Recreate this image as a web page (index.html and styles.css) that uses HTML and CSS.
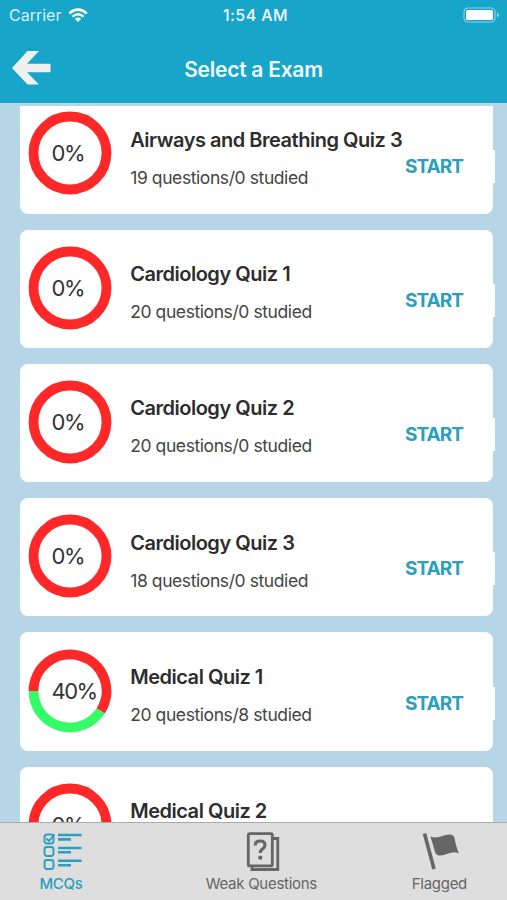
FILE: index.html
```html
<!DOCTYPE html>
<html lang="en">
<head>
  <meta charset="UTF-8">
  <meta name="viewport" content="width=device-width, initial-scale=1.0">
  <title>Select a Exam</title>
  <link rel="stylesheet" href="styles.css">
</head>
<body>
  <header class="header">
    <div class="status-bar">
      <div class="carrier">
        <span>Carrier</span>
        <svg class="wifi" viewBox="0 0 20 15" width="20" height="15">
          <path d="M1.2 5.500 Q10 -2.200 18.800 5.500" fill="none" stroke="#fff" stroke-width="2.500"/>
          <path d="M4.400 8.700 Q10 3.800 15.600 8.700" fill="none" stroke="#fff" stroke-width="2.400"/>
          <path d="M6.900 10.800 Q10 8 13.100 10.800 L10 14 Z" fill="#fff"/>
        </svg>
      </div>
      <span class="time">1:54 AM</span>
      <svg class="battery" viewBox="0 0 37 16" width="37" height="16">
        <rect x="1" y="1" width="31" height="14" rx="4" fill="none" stroke="#8ed3e6" stroke-width="1.200"/>
        <rect x="3" y="3" width="27" height="10" rx="1.500" fill="#fff"/>
        <path d="M34 5.500 Q36 6 36 8 Q36 10 34 10.500 Z" fill="#8ed3e6"/>
      </svg>
    </div>
    <div class="nav-bar">
      <svg class="back" viewBox="0 0 40 34" width="40" height="34">
        <path d="M0 17 L15.500 0 H27 L15 12.800 H38.500 V21.200 H15 L27 33.500 H15.500 Z" fill="#f0f0f0"/>
      </svg>
      <h1>Select a Exam</h1>
    </div>
  </header>

  <main class="list">
    <div class="card">
      <div class="ring">
        <svg viewBox="0 0 84 84" width="84" height="84"><circle class="track" cx="42" cy="42" r="36.500"/></svg>
        <span class="percent">0%</span>
      </div>
      <div class="info">
        <h2>Airways and Breathing Quiz 3</h2>
        <p>19 questions/0 studied</p>
      </div>
      <button class="start">START</button>
    </div>
    <div class="card">
      <div class="ring">
        <svg viewBox="0 0 84 84" width="84" height="84"><circle class="track" cx="42" cy="42" r="36.500"/></svg>
        <span class="percent">0%</span>
      </div>
      <div class="info">
        <h2>Cardiology Quiz 1</h2>
        <p>20 questions/0 studied</p>
      </div>
      <button class="start">START</button>
    </div>
    <div class="card">
      <div class="ring">
        <svg viewBox="0 0 84 84" width="84" height="84"><circle class="track" cx="42" cy="42" r="36.500"/></svg>
        <span class="percent">0%</span>
      </div>
      <div class="info">
        <h2>Cardiology Quiz 2</h2>
        <p>20 questions/0 studied</p>
      </div>
      <button class="start">START</button>
    </div>
    <div class="card">
      <div class="ring">
        <svg viewBox="0 0 84 84" width="84" height="84"><circle class="track" cx="42" cy="42" r="36.500"/></svg>
        <span class="percent">0%</span>
      </div>
      <div class="info">
        <h2>Cardiology Quiz 3</h2>
        <p>18 questions/0 studied</p>
      </div>
      <button class="start">START</button>
    </div>
    <div class="card">
      <div class="ring">
        <svg viewBox="0 0 84 84" width="84" height="84">
          <path class="track" d="M5.500 42 A36.500 36.500 0 1 1 72.600 61.900"/>
          <path class="done" d="M5.500 42 A36.500 36.500 0 0 0 72.600 61.900"/>
        </svg>
        <span class="percent">40%</span>
      </div>
      <div class="info">
        <h2>Medical Quiz 1</h2>
        <p>20 questions/8 studied</p>
      </div>
      <button class="start">START</button>
    </div>
    <div class="card">
      <div class="ring">
        <svg viewBox="0 0 84 84" width="84" height="84"><circle class="track" cx="42" cy="42" r="36.500"/></svg>
        <span class="percent">0%</span>
      </div>
      <div class="info">
        <h2>Medical Quiz 2</h2>
      </div>
    </div>
  </main>

  <nav class="tab-bar">
    <a class="tab tab-mcqs active">
      <svg viewBox="0 0 40 40" width="40" height="40" fill="none" stroke="currentColor" stroke-width="1.900">
        <rect x="1.500" y="2.500" width="9" height="9" rx="2.500"/>
        <rect x="1.500" y="15" width="9" height="9" rx="2.500"/>
        <rect x="1.500" y="28" width="9" height="9" rx="2.500"/>
        <path d="M3.500 6.500 L6 9 L11.500 2.500"/>
        <path stroke-width="2.600" d="M15 3 H38.500 M15 7.400 H28 M15 16 H38.500 M15 20.300 H28 M15 28.700 H38.500 M15 33.200 H28"/>
      </svg>
      <span>MCQs</span>
    </a>
    <a class="tab tab-weak">
      <svg viewBox="0 0 34 40" width="34" height="40" fill="none" stroke="currentColor" stroke-width="2.800">
        <rect x="2.300" y="1.600" width="24" height="32.300" rx="1.500"/>
        <path d="M6 34 V37.500 H31.800 V6.500 H27"/>
        <path stroke-width="3.200" d="M9.200 13.500 Q9.200 9 14.200 9 Q19 9 19 13 Q19 15.300 16.500 17 Q14.300 18.400 14.300 21"/>
        <circle cx="14.300" cy="25.700" r="2.100" fill="currentColor" stroke="none"/>
      </svg>
      <span>Weak Questions</span>
    </a>
    <a class="tab tab-flagged">
      <svg viewBox="0 0 38 40" width="38" height="40">
        <path d="M3.500 1.500 L13 37" stroke="currentColor" stroke-width="3.600"/>
        <path d="M9.500 4.500 C18 8 24 0.500 31 3 Q33 3.500 33.500 6 C34.500 12 36 17 38 21.500 C30 17.500 24 25.500 16.500 23 Q14.800 22.500 14 20 Z" fill="currentColor"/>
      </svg>
      <span>Flagged</span>
    </a>
  </nav>
</body>
</html>
```

FILE: styles.css
```css
* {
  margin: 0;
  padding: 0;
  box-sizing: border-box;
}

body {
  display: flex;
  flex-direction: column;
  height: 900px;
  overflow: hidden;
  background: #b6d5e6;
  color: #333;
  font-family: 'Inter', sans-serif;
}

.header {
  flex: none;
  height: 103px;
  background: #18a5ca;
  color: #f2fbfd;
}

.status-bar {
  display: grid;
  grid-template-columns: 1fr auto 1fr;
  align-items: center;
  height: 30px;
  padding: 0 7px 0 9px;
  font-size: 16px;
}

.carrier {
  display: flex;
  align-items: center;
  gap: 7px;
  color: #d6f0f7;
}

.time {
  padding-left: 2px;
  font-weight: 500;
  letter-spacing: 0.4px;
}

.battery {
  justify-self: end;
}

.nav-bar {
  display: grid;
  grid-template-columns: 40px 1fr 40px;
  align-items: center;
  height: 76px;
  padding: 0 12px;
}

h1 {
  font-size: 21px;
  font-weight: 600;
  letter-spacing: -0.250px;
  text-align: center;
  padding-top: 3px;
}

.list {
  flex: 1;
  min-height: 0;
  margin-top: 3px;
  padding: 0 14px 0 20px;
  overflow: hidden;
}

.card {
  display: flex;
  align-items: center;
  height: 118.300px;
  margin-bottom: 16px;
  padding-left: 8px;
  border-radius: 8px;
  background: #fff;
}

.card:first-child {
  margin-top: -10.800px;
}

.ring {
  display: grid;
  align-items: center;
  flex: none;
  width: 84px;
  height: 84px;
  margin-top: -2px;
}

.ring svg,
.percent {
  grid-area: 1 / 1;
}

.track,
.done {
  fill: none;
  stroke: #ff2828;
  stroke-width: 9.800;
}

.done {
  stroke: #35fb68;
}

.percent {
  padding-left: 23.500px;
  font-size: 22px;
  letter-spacing: -1.500px;
}

.info {
  flex: 1;
  height: 118px;
  padding: 31.300px 0 0 18.200px;
  white-space: nowrap;
}

h2 {
  font-size: 20px;
  font-weight: 600;
  line-height: 26px;
  letter-spacing: -0.480px;
  color: #2d2d2d;
}

.info p {
  margin-top: 13px;
  font-size: 17.500px;
  line-height: 24px;
  letter-spacing: -0.410px;
  color: #444;
}

.start {
  flex: none;
  width: 92px;
  height: 33px;
  margin: 23.500px -2px 0 -28px;
  padding-right: 30px;
  border: none;
  background: #fff;
  color: #2b9fbb;
  font-family: inherit;
  font-size: 19px;
  font-weight: 700;
  letter-spacing: -1px;
  text-align: center;
}

.tab-bar {
  display: flex;
  justify-content: space-between;
  flex: none;
  height: 78px;
  padding: 9px 40px 0 39px;
  border-top: 1px solid #aaa;
  background: #dedede;
  color: #666;
}

.tab {
  display: flex;
  flex-direction: column;
  align-items: center;
  gap: 2px;
  font-size: 15px;
  line-height: 20px;
  letter-spacing: -0.280px;
}

.tab.active {
  color: #2b9fbb;
}

.tab-mcqs span {
  font-weight: 500;
}

.tab-mcqs svg {
  margin-left: 4px;
}

.tab-weak {
  margin-left: 28px;
}

.tab-weak svg {
  margin-left: 3px;
}

.tab-flagged svg {
  margin-left: 1px;
}
```
